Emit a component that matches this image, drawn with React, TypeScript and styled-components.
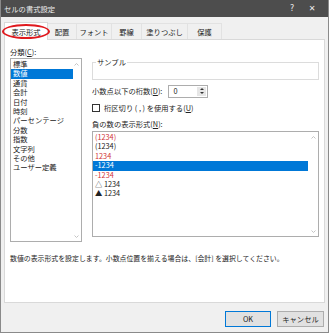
import styled, { createGlobalStyle } from 'styled-components';

const GlobalStyle = createGlobalStyle`
  html, body {
    margin: 0;
    padding: 0;
    background: #f0f0f0;
  }
  body {
    font-family: "Noto Sans CJK JP", "Noto Sans", sans-serif;
    font-size: 7.3px;
    color: #222;
  }
`;

const Window = styled.div`
  width: 329px;
  height: 333px;
  box-sizing: border-box;
  border: 1px solid #8a8a8a;
  border-top: none;
  background: #f0f0f0;
  display: flex;
  flex-direction: column;
`;

const TitleBar = styled.div`
  height: 17px;
  flex-shrink: 0;
  background: #4d4d4d;
  color: #ececec;
  display: flex;
  align-items: center;
  padding: 0 6px 0 3px;
`;

const TitleText = styled.span`
  flex: 1;
`;

const TitleButton = styled.span<{ $w: number }>`
  width: ${p => p.$w}px;
  text-align: center;
  font-family: "DejaVu Sans", sans-serif;
  font-size: 8px;
`;

const Body = styled.div`
  flex: 1;
  display: flex;
  flex-direction: column;
  padding: 4px 3px 0 3px;
`;

const TabRow = styled.div`
  height: 18px;
  flex-shrink: 0;
  display: flex;
  align-items: flex-end;
  position: relative;
`;

const Tab = styled.div<{ $w: number; $active?: boolean }>`
  width: ${p => p.$w}px;
  height: ${p => (p.$active ? 18 : 16)}px;
  box-sizing: border-box;
  display: flex;
  align-items: center;
  justify-content: center;
  background: ${p => (p.$active ? '#ffffff' : '#f0f0f0')};
  border: 1px solid ${p => (p.$active ? '#d9d9d9' : '#e2e2e2')};
  border-bottom: none;
  margin-bottom: ${p => (p.$active ? -1 : 0)}px;
  margin-left: ${p => (p.$active ? 0 : -1)}px;
  position: relative;
  z-index: ${p => (p.$active ? 1 : 0)};
  white-space: nowrap;
`;

const Circle = styled.div`
  position: absolute;
  left: -2px;
  top: 3px;
  width: 48px;
  height: 15px;
  box-sizing: border-box;
  border: 2px solid #e0191e;
  border-radius: 50%;
  z-index: 2;
`;

const Panel = styled.div`
  height: 264px;
  flex-shrink: 0;
  box-sizing: border-box;
  background: #ffffff;
  border: 1px solid #d9d9d9;
  padding: 7px 5px 0 5px;
  display: flex;
  flex-direction: column;
`;

const Columns = styled.div`
  display: flex;
  gap: 10px;
`;

const LeftColumn = styled.div`
  width: 72px;
  display: flex;
  flex-direction: column;
`;

const RightColumn = styled.div`
  flex: 1;
  display: flex;
  flex-direction: column;
  padding-top: 11px;
`;

const Label = styled.div<{ $h?: number }>`
  height: ${p => p.$h ?? 11}px;
  line-height: 10px;
  white-space: nowrap;
  u { text-decoration: underline; }
`;

const ListBox = styled.div<{ $h: number; $scroll: number }>`
  height: ${p => p.$h}px;
  box-sizing: border-box;
  border: 1px solid #adadad;
  position: relative;
  padding: 1px ${p => p.$scroll}px 0 0;
  background: #fff;
`;

const Item = styled.div<{ $selected?: boolean; $red?: boolean }>`
  height: 9.4px;
  line-height: 9.4px;
  padding-left: 2px;
  white-space: nowrap;
  background: ${p => (p.$selected ? '#0078d7' : 'transparent')};
  color: ${p => (p.$selected ? '#ffffff' : p.$red ? '#d13438' : '#222')};
`;

const ScrollIcon = styled.svg<{ $down?: boolean }>`
  position: absolute;
  right: 2px;
  ${p => (p.$down ? 'bottom: 3px;' : 'top: 4px;')}
  width: 5px;
  height: 3px;
`;

const GroupBox = styled.fieldset`
  margin: 0;
  height: 22px;
  box-sizing: border-box;
  border: 1px solid #dcdcdc;
  padding: 0;
  legend {
    padding: 0 1px;
    margin-left: 3px;
    line-height: 9px;
  }
`;

const FieldRow = styled.div`
  display: flex;
  align-items: center;
  gap: 6px;
  margin-top: 4px;
  height: 14px;
`;

const SpinBox = styled.div`
  width: 40px;
  height: 13px;
  box-sizing: border-box;
  border: 1px solid #adadad;
  display: flex;
  background: #fff;
`;

const SpinValue = styled.div`
  flex: 1;
  padding-left: 4px;
  line-height: 11px;
`;

const SpinButtons = styled.div`
  width: 9px;
  margin: 1px;
  background: #e6e6e6;
  display: flex;
  flex-direction: column;
  align-items: center;
  justify-content: center;
  gap: 2px;
`;

const SpinArrow = styled.div<{ $down?: boolean }>`
  width: 0;
  height: 0;
  border-left: 2px solid transparent;
  border-right: 2px solid transparent;
  ${p => (p.$down ? 'border-top: 2px solid #333;' : 'border-bottom: 2px solid #333;')}
`;

const CheckRow = styled.div`
  display: flex;
  align-items: center;
  gap: 4px;
  margin-top: 3px;
  height: 14px;
`;

const CheckBox = styled.div`
  width: 8px;
  height: 8px;
  box-sizing: border-box;
  border: 1px solid #333;
  background: #fff;
`;

const NegLabel = styled(Label)`
  margin-top: 4px;
`;

const Description = styled.div`
  margin-top: 11px;
  height: 10px;
  line-height: 10px;
  font-size: 6.9px;
  white-space: nowrap;
`;

const Footer = styled.div`
  flex: 1;
  display: flex;
  justify-content: flex-end;
  align-items: flex-start;
  gap: 6px;
  padding: 8px 1px 0 0;
`;

const Button = styled.div<{ $w: number; $default?: boolean }>`
  width: ${p => p.$w}px;
  height: 16px;
  box-sizing: border-box;
  display: flex;
  align-items: center;
  justify-content: center;
  background: #e1e1e1;
  border: 1px solid ${p => (p.$default ? '#0078d7' : '#adadad')};
  white-space: nowrap;
`;

const categories = [
  '標準', '数値', '通貨', '会計', '日付', '時刻', 'パーセンテージ',
  '分数', '指数', '文字列', 'その他', 'ユーザー定義',
];

const negatives = [
  { text: '(1234)', red: true },
  { text: '(1234)' },
  { text: '1234', red: true },
  { text: '-1234', selected: true },
  { text: '-1234', red: true },
  { text: '△ 1234' },
  { text: '▲ 1234' },
];

const tabs = [
  { label: '表示形式', w: 44 },
  { label: '配置', w: 30 },
  { label: 'フォント', w: 36 },
  { label: '罫線', w: 31 },
  { label: '塗りつぶし', w: 47 },
  { label: '保護', w: 35 },
];

const Scroll = () => (
  <>
    <ScrollIcon viewBox="0 0 5 3">
      <path d="M0.5 2.5 L2.5 0.5 L4.5 2.5" fill="none" stroke="#c4c4c4" strokeWidth="1" />
    </ScrollIcon>
    <ScrollIcon viewBox="0 0 5 3" $down>
      <path d="M0.5 0.5 L2.5 2.5 L4.5 0.5" fill="none" stroke="#c4c4c4" strokeWidth="1" />
    </ScrollIcon>
  </>
);

export default function App() {
  return (
    <>
      <GlobalStyle />
      <Window>
        <TitleBar>
          <TitleText>セルの書式設定</TitleText>
          <TitleButton $w={20}>?</TitleButton>
          <TitleButton $w={20}>✕</TitleButton>
        </TitleBar>
        <Body>
          <TabRow>
            {tabs.map((t, i) => (
              <Tab key={t.label} $w={t.w} $active={i === 0}>{t.label}</Tab>
            ))}
            <Circle />
          </TabRow>
          <Panel>
            <Columns>
              <LeftColumn>
                <Label>分類(<u>C</u>):</Label>
                <ListBox $h={184} $scroll={8}>
                  {categories.map((c, i) => (
                    <Item key={c} $selected={i === 1}>{c}</Item>
                  ))}
                  <Scroll />
                </ListBox>
              </LeftColumn>
              <RightColumn>
                <GroupBox>
                  <legend>サンプル</legend>
                </GroupBox>
                <FieldRow>
                  <span>小数点以下の桁数(<u>D</u>):</span>
                  <SpinBox>
                    <SpinValue>0</SpinValue>
                    <SpinButtons>
                      <SpinArrow />
                      <SpinArrow $down />
                    </SpinButtons>
                  </SpinBox>
                </FieldRow>
                <CheckRow>
                  <CheckBox />
                  <span>桁区切り ( , ) を使用する(<u>U</u>)</span>
                </CheckRow>
                <NegLabel $h={12}>負の数の表示形式(<u>N</u>):</NegLabel>
                <ListBox $h={106} $scroll={10}>
                  {negatives.map((n, i) => (
                    <Item key={i} $red={n.red} $selected={n.selected}>{n.text}</Item>
                  ))}
                  <Scroll />
                </ListBox>
              </RightColumn>
            </Columns>
            <Description>
              数値の表示形式を設定します。小数点位置を揃える場合は、[会計] を選択してください。
            </Description>
          </Panel>
          <Footer>
            <Button $w={46} $default>OK</Button>
            <Button $w={47}>キャンセル</Button>
          </Footer>
        </Body>
      </Window>
    </>
  );
}
